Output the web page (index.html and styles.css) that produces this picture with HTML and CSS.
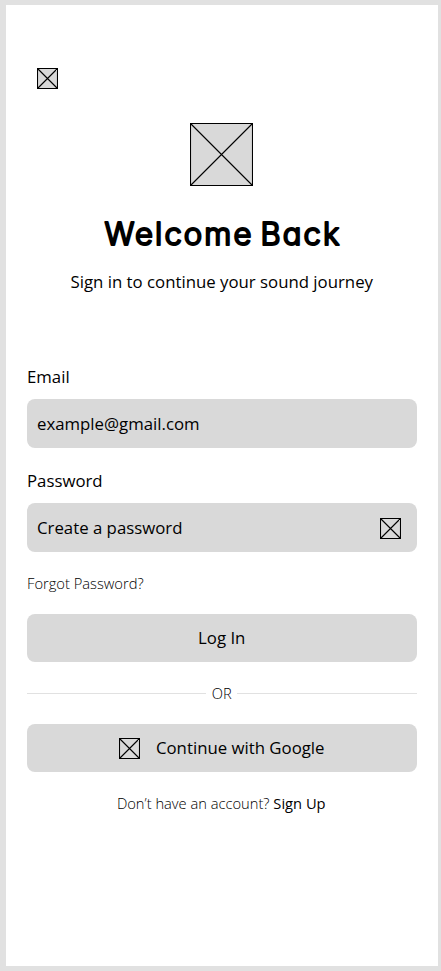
FILE: index.html
```html
<!DOCTYPE html>
<html lang="en">
<head>
<meta charset="utf-8">
<title>Welcome Back</title>
<link rel="stylesheet" href="styles.css">
</head>
<body>
<svg class="defs" aria-hidden="true">
  <symbol id="box" viewBox="0 0 21 21"><path d="M.5.5h20v20H.5zM.5.5l20 20M20.500.5l-20 20"/></symbol>
</svg>
<main class="screen">
  <svg class="icon back"><use href="#box"/></svg>
  <svg class="logo" viewBox="0 0 63 63"><path d="M.5.5h62v62H.5zM.5.5l62 62M62.500.5l-62 62"/></svg>
  <h1 class="title"><svg class="title-art" viewBox="0 0 240 44"><text y="31"><tspan x="2.500" textLength="147" lengthAdjust="spacing">Welcome</tspan> <tspan x="158.500" textLength="79" lengthAdjust="spacing">Back</tspan></text></svg></h1>
  <p class="subtitle">Sign in to continue your sound journey</p>
  <form class="form">
    <label class="label">Email</label>
    <div class="field"><span>example@gmail.com</span></div>
    <label class="label">Password</label>
    <div class="field"><span>Create a password</span><svg class="icon toggle"><use href="#box"/></svg></div>
    <a class="forgot">Forgot Password?</a>
    <button class="button" type="button">Log In</button>
    <div class="divider"><span>OR</span></div>
    <button class="button" type="button"><svg class="icon"><use href="#box"/></svg><span>Continue with Google</span></button>
    <p class="signup">Don’t have an account? <a>Sign Up</a></p>
  </form>
</main>
</body>
</html>
```
FILE: styles.css
```css
* { box-sizing: border-box; }
body {
  margin: 0;
  height: 971px;
  padding: 5px 3.500px 5px 6px;
  background: #e1e1e1;
  font-family: "Open Sans", sans-serif;
  font-size: 16.8px;
  line-height: 24px;
  color: #000;
}
.defs { position: absolute; width: 0; height: 0; }
.screen {
  height: 961px;
  padding: 63px 21px 0;
  background: #fff;
  display: flex;
  flex-direction: column;
}
.icon, .logo {
  display: block;
  flex: none;
  fill: #d9d9d9;
  stroke: #000;
  stroke-width: 1.1;
}
.icon { width: 21px; height: 21px; }
.back { margin-left: 10px; }
.toggle { margin-top: 1px; }
.logo { width: 63px; height: 63px; margin: 34px 0 0 163px; }
.title { margin: 28px 0 0 75px; height: 44px; }
.title-art { display: block; width: 240px; height: 44px; }
.title-art text {
  font: 300 31px Inter, sans-serif;
  font-feature-settings: "cv11";
  stroke: #000;
  stroke-width: 2.1;
  stroke-linejoin: round;
}
.subtitle { margin: 12px 0 0; text-align: center; }
.form { margin-top: 71px; display: flex; flex-direction: column; }
.label { height: 24px; }
.field {
  height: 49px;
  margin: 10px 0 21px;
  padding: 0 16px 0 10px;
  border-radius: 8px;
  background: #d9d9d9;
  display: flex;
  align-items: center;
  justify-content: space-between;
}
.forgot, .divider, .signup { font-size: 14.7px; font-weight: 300; line-height: 20px; }
.forgot { margin-bottom: 21px; }
.button {
  height: 48px;
  padding: 0;
  border: 0;
  border-radius: 8px;
  background: #d9d9d9;
  color: #000;
  font: inherit;
  display: flex;
  align-items: center;
  justify-content: center;
  gap: 16px;
}
.divider { display: flex; align-items: center; gap: 5.500px; margin: 21px 0; }
.divider::before, .divider::after { content: ""; flex: 1; height: 1px; background: #e1e1e1; }
.signup { margin: 21px 1px 0 0; text-align: center; }
.signup a { font-weight: 400; }
```
